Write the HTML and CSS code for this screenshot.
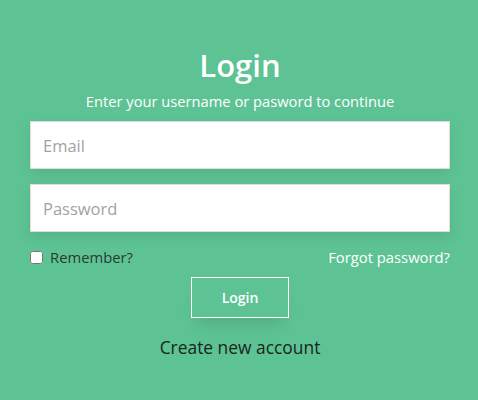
FILE: index.html
```html
<!DOCTYPE html>
<html lang="en">
<head>
  <meta charset="UTF-8" />
  <meta name="viewport" content="width=device-width, initial-scale=1.0"/>
  <title>Login</title>
  <link rel="stylesheet" href="styles.css">
</head>
<body>

  <main class="login">
    <h1>Login</h1>
    <p class="subtitle">Enter your username or pasword to continue</p>

    <form class="login-form">
      <input type="email" placeholder="Email" />
      <input type="password" placeholder="Password" />

      <div class="options">
        <label class="remember">
          <input type="checkbox" />
          <span>Remember?</span>
        </label>
        <a href="#" class="forgot">Forgot password?</a>
      </div>

      <button type="submit">Login</button>
    </form>

    <a href="#" class="create">Create new account</a>
  </main>

</body>
</html>
```

FILE: styles.css
```css
body {
  font-family: "Open Sans", sans-serif;
  background-color: #5dc394;
  margin: 0;
  padding: 0 0 0 2px;
}

.login {
  width: 420px;
  margin: 0 auto;
  padding-top: 44px;
  display: flex;
  flex-direction: column;
  align-items: center;
}

.login h1 {
  margin: 0;
  font-size: 31px;
  font-weight: 600;
  line-height: 42px;
  color: #fff;
}

.subtitle {
  margin: 4px 0 9px;
  font-size: 14.7px;
  line-height: 22px;
  color: #fff;
}

.login-form {
  width: 100%;
  display: flex;
  flex-direction: column;
  gap: 15px;
}

.login-form input[type="email"],
.login-form input[type="password"] {
  box-sizing: border-box;
  width: 100%;
  height: 48px;
  padding: 0 12px;
  font-family: inherit;
  font-size: 16.5px;
  border: 1px solid #ddd;
  background-color: #fff;
  box-shadow: 0 6px 12px rgba(0, 0, 0, 0.08);
  outline: none;
}

.login-form input::placeholder {
  color: #a8a0a0;
}

.options {
  display: flex;
  justify-content: space-between;
  align-items: center;
  height: 20px;
  margin-top: 0;
  font-size: 14.8px;
}

.remember {
  display: flex;
  align-items: center;
  gap: 7px;
  color: #2b3a33;
}

.remember input {
  margin: 0;
  width: 13px;
  height: 13px;
}

.forgot {
  color: #fff;
  text-decoration: none;
}

.login-form button {
  align-self: center;
  width: 98px;
  height: 41px;
  margin-top: -5px;
  font-family: inherit;
  font-size: 14px;
  font-weight: 600;
  color: #fff;
  background: transparent;
  border: 1px solid #fff;
  box-shadow: 0 12px 16px -6px rgba(0, 0, 0, 0.12);
  cursor: pointer;
}

.create {
  margin-top: 17px;
  font-size: 17.4px;
  line-height: 24px;
  color: #1a2520;
  text-decoration: none;
}
```
